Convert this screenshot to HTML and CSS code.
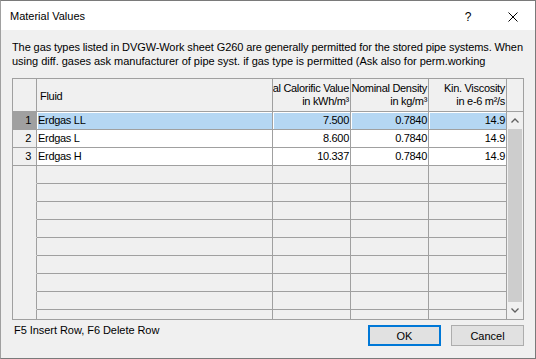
FILE: index.html
```html
<!DOCTYPE html>
<html>
<head>
<meta charset="utf-8">
<link rel="stylesheet" href="styles.css">
</head>
<body>
<div class="window">
  <div class="titlebar">
    <span class="title">Material Values</span>
    <span class="tb-btn help">?</span>
    <span class="tb-btn close"><svg width="10" height="10" viewBox="0 0 10 10"><path d="M0.5 0.5 L9.5 9.5 M9.5 0.5 L0.5 9.5" stroke="#000" stroke-width="1" fill="none"/></svg></span>
  </div>
  <div class="body">
    <p class="intro"><span class="l1">The gas types listed in DVGW-Work sheet G260 are generally permitted for the stored pipe systems. When</span><span class="l2">using diff. gases ask manufacturer of pipe syst. if gas type is permitted (Ask also for perm.working</span></p>
    <div class="grid">
      <div class="ghead">
        <div class="hc"></div>
        <div class="hc left"><span>Fluid</span></div>
        <div class="hc right"><span>Normal Calorific Value</span><span>in kWh/m³</span></div>
        <div class="hc right"><span>Nominal Density</span><span>in kg/m³</span></div>
        <div class="hc right"><span>Kin. Viscosity</span><span>in e-6 m²/s</span></div>
        <div class="hc last"></div>
      </div>
      <div class="gbody">
        <div class="rows">
          <div class="row data sel"><div class="c rn">1</div><div class="c txt">Erdgas LL</div><div class="c num">7.500</div><div class="c num">0.7840</div><div class="c num">14.9</div></div>
          <div class="row data"><div class="c rn">2</div><div class="c txt">Erdgas L</div><div class="c num">8.600</div><div class="c num">0.7840</div><div class="c num">14.9</div></div>
          <div class="row data"><div class="c rn">3</div><div class="c txt">Erdgas H</div><div class="c num">10.337</div><div class="c num">0.7840</div><div class="c num">14.9</div></div>
          <div class="row empty"><div class="c rn"></div><div class="c"></div><div class="c"></div><div class="c"></div><div class="c"></div></div>
          <div class="row empty"><div class="c rn"></div><div class="c"></div><div class="c"></div><div class="c"></div><div class="c"></div></div>
          <div class="row empty"><div class="c rn"></div><div class="c"></div><div class="c"></div><div class="c"></div><div class="c"></div></div>
          <div class="row empty"><div class="c rn"></div><div class="c"></div><div class="c"></div><div class="c"></div><div class="c"></div></div>
          <div class="row empty"><div class="c rn"></div><div class="c"></div><div class="c"></div><div class="c"></div><div class="c"></div></div>
          <div class="row empty"><div class="c rn"></div><div class="c"></div><div class="c"></div><div class="c"></div><div class="c"></div></div>
          <div class="row empty"><div class="c rn"></div><div class="c"></div><div class="c"></div><div class="c"></div><div class="c"></div></div>
          <div class="row empty"><div class="c rn"></div><div class="c"></div><div class="c"></div><div class="c"></div><div class="c"></div></div>
          <div class="row empty"><div class="c rn"></div><div class="c"></div><div class="c"></div><div class="c"></div><div class="c"></div></div>
        </div>
        <div class="sbar">
          <div class="arrow"><svg width="8" height="5" viewBox="0 0 8 5"><path d="M0.5 4.5 L4 1 L7.5 4.5" fill="none" stroke="#606060" stroke-width="1.3"/></svg></div>
          <div class="thumb"></div>
          <div class="arrow"><svg width="8" height="5" viewBox="0 0 8 5"><path d="M0.5 0.5 L4 4 L7.5 0.5" fill="none" stroke="#606060" stroke-width="1.3"/></svg></div>
        </div>
      </div>
    </div>
    <div class="footer">
      <span class="hint">F5 Insert Row, F6 Delete Row</span>
      <button class="btn ok">OK</button>
      <button class="btn">Cancel</button>
    </div>
  </div>
</div>
</body>
</html>
```
FILE: styles.css
```css
* { box-sizing: border-box; margin: 0; padding: 0; }
html, body { width: 536px; height: 359px; overflow: hidden; }
body {
  font-family: "Liberation Sans", Arial, sans-serif;
  font-size: 11px;
  color: #000;
  background: #f0f0f0;
}
.window {
  width: 536px;
  height: 359px;
  border: 1px solid #7a7a7a;
  border-left-color: #a0a0a0;
  background: #f0f0f0;
  display: flex;
  flex-direction: column;
}
.titlebar {
  height: 29px;
  flex: none;
  background: #fff;
  display: flex;
  align-items: stretch;
}
.title {
  flex: 1;
  display: flex;
  align-items: center;
  padding: 1px 0 0 9px;
  font-size: 11px;
}
.tb-btn {
  display: flex;
  align-items: center;
  justify-content: center;
  padding-top: 2px;
}
.help { width: 46px; font-size: 12px; }
.close { width: 44px; }
.body {
  flex: 1;
  display: flex;
  flex-direction: column;
  padding: 10px 11px 0;
}
.intro {
  height: 31px;
  margin-bottom: 7px;
  overflow: hidden;
  line-height: 14px;
  white-space: nowrap;
  flex: none;
}
.intro span { display: block; }
.intro .l1 { letter-spacing: -0.1px; }
.intro .l2 { letter-spacing: -0.02px; }
.grid {
  flex: none;
  height: 242px;
  border: 1px solid #a0a0a0;
  display: flex;
  flex-direction: column;
}
.ghead {
  flex: none;
  height: 33px;
  display: grid;
  grid-template-columns: 24px 236px 78px 78px 78px 16px;
  border-bottom: 1px solid #a0a0a0;
}
.hc {
  border-right: 1px solid #a0a0a0;
  overflow: hidden;
  display: flex;
  flex-direction: column;
  justify-content: center;
  line-height: 13px;
  letter-spacing: -0.3px;
  white-space: nowrap;
}
.hc.last { border-right: none; }
.hc.left { padding: 3px 0 0 3px; }
.hc.right { align-items: flex-end; padding-right: 1px; }
.gbody {
  flex: 1;
  min-height: 0;
  display: flex;
}
.rows {
  width: 494px;
  overflow: hidden;
}
.row {
  display: grid;
  grid-template-columns: 24px 236px 78px 78px 78px;
  height: 18px;
}
.c {
  border-right: 1px solid #a0a0a0;
  border-bottom: 1px solid #a0a0a0;
  line-height: 17px;
  white-space: nowrap;
  overflow: hidden;
  letter-spacing: -0.3px;
  background: #f0f0f0;
}
.c.txt { padding-left: 1px; }
.c.num { text-align: right; padding-right: 1px; }
.c.rn { text-align: right; padding-right: 5px; }
.row.data .c { background: #fff; }
.row.data .c.rn { background: #f0f0f0; }
.row.sel .c { background: #b5d7f3; box-shadow: inset 1px 1px 0 #fff; }
.row.sel .c.rn { background: #a0a0a0; box-shadow: none; }
.row.empty .c.rn { border-bottom-color: transparent; }
.sbar {
  width: 16px;
  display: flex;
  flex-direction: column;
  background: #f0f0f0;
}
.arrow {
  height: 17px;
  flex: none;
  display: flex;
  align-items: center;
  justify-content: center;
}
.thumb {
  flex: 1;
  margin: 0 1px;
  background: #cdcdcd;
}
.footer {
  display: flex;
  align-items: flex-start;
  margin-top: 5px;
}
.hint {
  flex: 1;
  margin: -2px 0 0 2px;
  line-height: 14px;
  letter-spacing: -0.05px;
}
.btn {
  width: 73px;
  height: 21px;
  margin-left: 10px;
  background: #e1e1e1;
  border: 1px solid #adadad;
  font-family: inherit;
  font-size: 11px;
  color: #000;
}
.btn.ok { margin-left: 0; border: 2px solid #0078d7; }
```
